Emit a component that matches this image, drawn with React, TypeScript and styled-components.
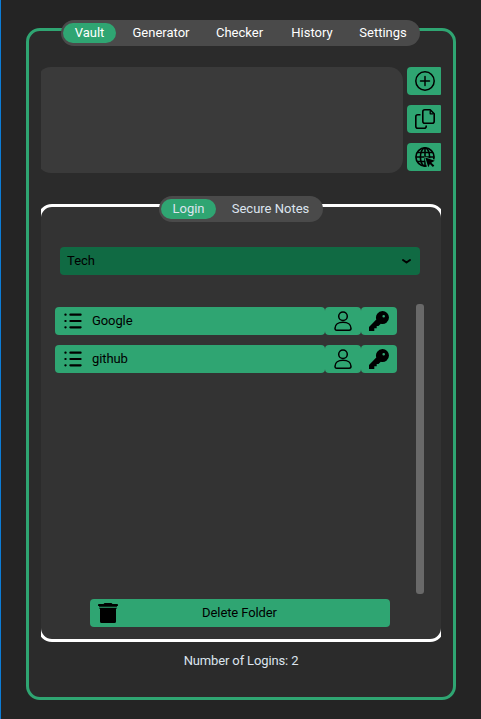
import React, { useState } from "react";
import styled, { createGlobalStyle } from "styled-components";

const GREEN = "#2fa572";

const GlobalStyle = createGlobalStyle`
  * { box-sizing: border-box; }
  body {
    margin: 0;
    background: #242424;
    font-family: Roboto, "Liberation Sans", sans-serif;
    font-size: 13px;
    color: #dce4ee;
  }
  button { font: inherit; border: 0; padding: 0; margin: 0; cursor: pointer; }
`;

const Window = styled.main`
  height: 719px;
  width: 481px;
  padding: 28px 25px 0;
  border-left: 1px solid #0c7cd5;
  overflow: hidden;
`;

const Frame = styled.section`
  width: 430px;
  height: 672px;
  border: 3px solid ${GREEN};
  border-radius: 14px;
  background: #2b2b2b;
  display: flex;
  flex-direction: column;
  align-items: center;
`;

const TabBar = styled.nav<{ $width: number; $nudge?: number }>`
  flex: none;
  display: flex;
  align-items: center;
  width: ${(p) => p.$width}px;
  height: 26px;
  margin-top: -11px;
  margin-right: ${(p) => p.$nudge ?? 0}px;
  padding-left: 2px;
  border-radius: 13px;
  background: #4a4a4a;
`;

const Tab = styled.button<{ $active: boolean; $width: number; $color: string }>`
  flex: none;
  width: ${(p) => p.$width}px;
  height: 20px;
  line-height: 20px;
  border-radius: 10px;
  color: ${(p) => p.$color};
  background: ${(p) => (p.$active ? GREEN : "transparent")};
  white-space: nowrap;
`;

const Content = styled.div`
  width: 400px;
  overflow: hidden;
  display: flex;
  flex-direction: column;
`;

const TopRow = styled.div`
  display: flex;
  justify-content: space-between;
  height: 106px;
  margin-top: 21px;
`;

const TextArea = styled.div`
  width: 366px;
  height: 106px;
  margin-left: -4px;
  border-radius: 14px;
  background: #3a3a3a;
`;

const ActionColumn = styled.div`
  display: flex;
  flex-direction: column;
  gap: 10px;
`;

const ActionButton = styled.button`
  display: flex;
  align-items: center;
  justify-content: center;
  width: 34px;
  height: 28px;
  padding-left: 2px;
  border-radius: 4px 1px 1px 4px;
  background: ${GREEN};
`;

const Panel = styled.section`
  width: 406px;
  height: 438px;
  margin: 31px -3px 0;
  border: 3px solid #fff;
  border-radius: 14px;
  background: #333;
  display: flex;
  flex-direction: column;
`;

const PanelTabs = styled.div`
  display: flex;
  justify-content: center;
`;

const Dropdown = styled.button`
  display: flex;
  align-items: center;
  justify-content: space-between;
  width: 360px;
  height: 28px;
  margin: 25px 0 0 19px;
  padding: 0 9px 1px 7px;
  border-radius: 4px;
  color: #000;
  background: #106a43;
`;

const ScrollArea = styled.div`
  display: flex;
  height: 290px;
  margin: 29px 17px 0 14px;
  justify-content: space-between;
`;

const List = styled.ul`
  list-style: none;
  margin: 0;
  padding: 3px 0 0;
  display: flex;
  flex-direction: column;
  gap: 10px;
`;

const Item = styled.li`
  display: flex;
  height: 28px;
`;

const ItemPart = styled.button`
  display: flex;
  align-items: center;
  height: 28px;
  border-radius: 4px;
  color: #000;
  background: ${GREEN};
`;

const NameButton = styled(ItemPart)`
  width: 270px;
  gap: 9px;
  padding-left: 8px;
`;

const IconButton = styled(ItemPart)`
  width: 36px;
  justify-content: center;
`;

const Label = styled.span`
  padding-bottom: 2px;
  letter-spacing: -0.1px;
`;

const ScrollThumb = styled.div`
  width: 8px;
  height: 290px;
  border-radius: 3px;
  background: #696969;
`;

const DeleteButton = styled.button`
  display: grid;
  grid-template-columns: 36px 1fr 37px;
  align-items: center;
  justify-items: center;
  width: 300px;
  height: 28px;
  margin: 5px 0 0 49px;
  border-radius: 4px;
  color: #000;
  background: ${GREEN};
`;

const Status = styled.p`
  margin: 11px 0 0;
  line-height: 16px;
  text-align: center;
  letter-spacing: -0.14px;
`;

const PlusIcon = () => (
  <svg width="20" height="20" viewBox="0 0 20 20" fill="none" stroke="#000" strokeWidth="1.5" strokeLinecap="round">
    <circle cx="10" cy="10" r="9.2" />
    <path d="M10 5.500v9M5.500 10h9" />
  </svg>
);

const CopyIcon = () => (
  <svg width="20" height="20" viewBox="0 0 20 20" fill="none" stroke="#000" strokeWidth="1.6" strokeLinejoin="round">
    <path d="M9.800.8h5.400l4 4v7.500q0 2-2 2H9.800q-2 0-2-2V2.800q0-2 2-2Z" />
    <path d="M15.200 1.500v3.300h3.300" strokeWidth="1.300" />
    <path d="M5.500 5.700H2.800q-2 0-2 2v9.500q0 2 2 2h6.400q2 0 2-2v-.7" />
  </svg>
);

const GlobeIcon = () => (
  <svg width="20" height="20" viewBox="0 0 20 20" fill="none" stroke="#000" strokeWidth="1.6">
    <circle cx="10" cy="10" r="9.100" />
    <ellipse cx="10" cy="10" rx="4.600" ry="9.100" />
    <path d="M10 1v18M1 10h18M2.500 5.500h15M2.500 14.500h15" />
    <path d="M12 20.500 9.200 9.600 21 13v7.500Z" fill={GREEN} stroke="none" />
    <path d="m10.300 10.500 9.500 3.300-3.500 1.900 3 2.900-1.400 1.400-3-3-1.600 3.300Z" fill="#000" stroke="none" />
  </svg>
);

const ChevronIcon = () => (
  <svg width="9" height="6" viewBox="0 0 9 6" fill="none" stroke="#000" strokeWidth="2" strokeLinecap="round" strokeLinejoin="round">
    <path d="m1 2 3.500 2.500L8 2" />
  </svg>
);

const ListIcon = () => (
  <svg width="20" height="18" viewBox="0 0 20 18" fill="none" stroke="#000" strokeWidth="2.200" strokeLinecap="round">
    <path d="M7.400 2.700h10.200M7.400 9h10.200M7.400 15.300h10.200M2.400 2.700h.2M2.400 9h.2M2.400 15.300h.2" />
  </svg>
);

const PersonIcon = () => (
  <svg width="18" height="20" viewBox="0 0 18 20" fill="none" stroke="#000" strokeWidth="1.500" strokeLinejoin="round">
    <circle cx="9" cy="5.200" r="4.300" />
    <path d="M1 17.300c0-3.600 3.300-6 8-6s8 2.400 8 6q0 1.900-1.700 1.900H2.700Q1 19.200 1 17.300Z" />
  </svg>
);

const KeyIcon = () => (
  <svg width="20" height="20" viewBox="0 0 20 20" fill="#000">
    <path
      fillRule="evenodd"
      d="M13.500 0A6.500 6.500 0 0 1 20 6.500a6.500 6.500 0 0 1-8.200 6.300L9.500 15H7.700v2.200H5.300V20H0v-4l7.300-7.500A6.500 6.500 0 0 1 13.500 0Zm1.200 4a1.300 1.300 0 1 0 0 2.600 1.300 1.300 0 0 0 0-2.600Z"
    />
  </svg>
);

const TrashIcon = () => (
  <svg width="20" height="20" viewBox="0 0 20 20" fill="#000">
    <path d="M0 1.800Q0 1 1 1h4.500L6.500 0h7l1 1H19q1 0 1 .8v.7q0 .5-1 .5v.8H1V3q-1 0-1-.5Z" />
    <path d="M1 4.800h18v.7h-1v13q0 1.500-1.500 1.500h-13Q2 20 2 18.500v-13H1Z" />
  </svg>
);

const mainTabs = [
  { label: "Vault", width: 53 },
  { label: "Generator", width: 90 },
  { label: "Checker", width: 67 },
  { label: "History", width: 78 },
  { label: "Settings", width: 64 },
];

const vaultTabs = [
  { label: "Login", width: 55 },
  { label: "Secure Notes", width: 109 },
];

const logins = ["Google", "github"];

export default function App() {
  const [tab, setTab] = useState("Vault");
  const [section, setSection] = useState("Login");

  return (
    <>
      <GlobalStyle />
      <Window>
        <Frame>
          <TabBar $width={359} $nudge={1}>
            {mainTabs.map((t) => (
              <Tab key={t.label} $width={t.width} $active={t.label === tab} $color="#fff" onClick={() => setTab(t.label)}>
                {t.label}
              </Tab>
            ))}
          </TabBar>
          <Content>
            <TopRow>
              <TextArea />
              <ActionColumn>
                <ActionButton aria-label="Add"><PlusIcon /></ActionButton>
                <ActionButton aria-label="Copy"><CopyIcon /></ActionButton>
                <ActionButton aria-label="Open site"><GlobeIcon /></ActionButton>
              </ActionColumn>
            </TopRow>
            <Panel>
              <PanelTabs>
                <TabBar $width={164}>
                  {vaultTabs.map((t) => (
                    <Tab key={t.label} $width={t.width} $active={t.label === section} $color="#dce4ee" onClick={() => setSection(t.label)}>
                      {t.label}
                    </Tab>
                  ))}
                </TabBar>
              </PanelTabs>
              <Dropdown>
                Tech
                <ChevronIcon />
              </Dropdown>
              <ScrollArea>
                <List>
                  {logins.map((name) => (
                    <Item key={name}>
                      <NameButton><ListIcon /><Label>{name}</Label></NameButton>
                      <IconButton aria-label="Copy username"><PersonIcon /></IconButton>
                      <IconButton aria-label="Copy password"><KeyIcon /></IconButton>
                    </Item>
                  ))}
                </List>
                <ScrollThumb />
              </ScrollArea>
              <DeleteButton>
                <TrashIcon />
                <Label>Delete Folder</Label>
              </DeleteButton>
            </Panel>
            <Status>Number of Logins: 2</Status>
          </Content>
        </Frame>
      </Window>
    </>
  );
}
